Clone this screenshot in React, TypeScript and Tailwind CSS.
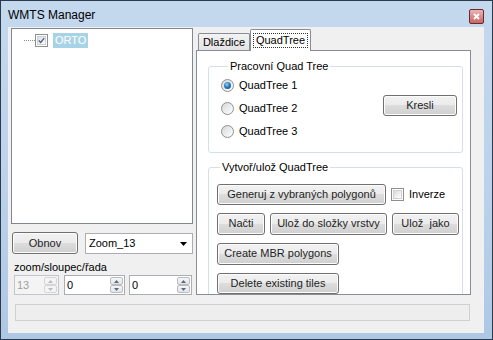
import React from 'react';

const btn =
  'flex items-center justify-center rounded-[3px] border border-[#707070] bg-[linear-gradient(#f2f2f2_0%,#ebebeb_49%,#dddddd_50%,#cfcfcf_100%)] shadow-[inset_0_0_0_1px_#fcfcfc] text-[11px] leading-none text-[#1e1e1e]';

function Btn({ className, children }: { className: string; children: React.ReactNode }) {
  return <div className={`${btn} ${className}`}>{children}</div>;
}

function Check({ checked }: { checked?: boolean }) {
  return (
    <div className="w-[13px] h-[13px] border border-[#8e8f8f] bg-white p-[1px] shrink-0">
      <div className="w-full h-full border border-[#d0d0d0] bg-[linear-gradient(135deg,#dcdcdc,#ffffff)] flex items-center justify-center">
        {checked && (
          <svg width="9" height="9" viewBox="0 0 9 9">
            <path d="M1 4.5 L3.5 7 L8 1.5" fill="none" stroke="#4a5f97" strokeWidth="1.8" />
          </svg>
        )}
      </div>
    </div>
  );
}

function Radio({ checked, label }: { checked?: boolean; label: string }) {
  return (
    <div className="flex items-center h-[23px]">
      <div className="w-[13px] h-[13px] rounded-full border border-[#8f8f8f] bg-[linear-gradient(135deg,#d8d8d8,#ffffff)] flex items-center justify-center">
        {checked && (
          <div className="w-[7px] h-[7px] rounded-full bg-[radial-gradient(circle_at_40%_35%,#8fd3f5_0%,#2a7dbf_45%,#0e3f73_100%)]" />
        )}
      </div>
      <span className="ml-[5px] text-[11px]">{label}</span>
    </div>
  );
}

function Arrow({ up, color }: { up?: boolean; color: string }) {
  return (
    <svg width="5" height="3" viewBox="0 0 5 3">
      <path d={up ? 'M0 3 L2.5 0 L5 3 Z' : 'M0 0 L2.5 3 L5 0 Z'} fill={color} />
    </svg>
  );
}

function Spin({ className, value, disabled }: { className: string; value: string; disabled?: boolean }) {
  const half = `flex-1 flex items-center justify-center rounded-[2px] border ${
    disabled ? 'border-[#d5d5d5] bg-[#f4f4f4]' : 'border-[#b9bcc2] bg-[linear-gradient(#f6f6f6,#e4e4e4)]'
  }`;
  const ac = disabled ? '#b8bcc2' : '#5a6b80';
  return (
    <div
      className={`flex h-[20px] border ${
        disabled ? 'border-[#c2c5c9] bg-[#f4f4f4] text-[#9f9f9f]' : 'border-[#abadb3] bg-white text-black'
      } ${className}`}
    >
      <div className="flex-1 flex items-center pl-[2px] text-[11px]">{value}</div>
      <div className="w-[15px] flex flex-col p-[1px]">
        <div className={half}>
          <Arrow up color={ac} />
        </div>
        <div className={half}>
          <Arrow color={ac} />
        </div>
      </div>
    </div>
  );
}

export default function App() {
  return (
    <div className="w-[493px] h-[340px] border border-[#2c3a4d] bg-[linear-gradient(180deg,#c4d8ee_0%,#bdd3eb_50%,#aec8e4_100%)] flex flex-col font-['Liberation_Sans',Arial,sans-serif] text-black select-none">
      {/* title bar */}
      <div className="h-[26px] flex items-center justify-between pl-[7px] pr-[8px]">
        <span className="text-[12px] mt-[1px]">WMTS Manager</span>
        <div className="mt-[4px] w-[15px] h-[15px] rounded-[2px] border border-[#6b2a2a] bg-[linear-gradient(#eab4b4,#c96565)] flex items-center justify-center">
          <svg width="7" height="7" viewBox="0 0 7 7">
            <path d="M1 1 L6 6 M6 1 L1 6" stroke="#ffffff" strokeWidth="1.8" />
          </svg>
        </div>
      </div>

      {/* client */}
      <div className="flex-1 ml-[7px] mr-[8px] mb-[6px] bg-[#f0f0f0] flex flex-col text-[11px]">
        <div className="flex h-[268px]">
          {/* left column */}
          <div className="ml-[3px] w-[182px] flex flex-col">
            <div className="mt-[1px] h-[198px] border border-[#828790] bg-white">
              <div className="flex items-center mt-[4px] ml-[12px]">
                <div className="w-[11px] border-t border-dotted border-[#8a8a8a]" />
                <Check checked />
                <span className="ml-[5px] h-[15px] px-[2px] flex items-center bg-[#a8d3e6] text-white text-[11px]">ORTO</span>
              </div>
            </div>
            <div className="mt-[8px] flex">
              <Btn className="ml-[1px] w-[66px] h-[22px]">Obnov</Btn>
              <div className="ml-[7px] mt-[1px] w-[108px] h-[21px] border border-[#abadb3] bg-white flex items-center justify-between pl-[3px] pr-[5px]">
                <span>Zoom_13</span>
                <svg width="7" height="4" viewBox="0 0 7 4">
                  <path d="M0 0 L3.5 4 L7 0 Z" fill="#000" />
                </svg>
              </div>
            </div>
            <div className="mt-[6px] ml-[3px] h-[14px] leading-[14px]">zoom/sloupec/řada</div>
            <div className="mt-[1px] ml-[3px] flex">
              <Spin className="w-[45px]" value="13" disabled />
              <Spin className="ml-[5px] w-[61px]" value="0" />
              <Spin className="ml-[4px] w-[63px]" value="0" />
            </div>
          </div>

          {/* tab control */}
          <div className="ml-[3px] w-[275px] flex flex-col">
            <div className="h-[23px] flex items-end">
              <div className="ml-[2px] w-[52px] h-[17px] border border-b-0 border-[#898c95] bg-[linear-gradient(#f3f3f3,#e3e3e3)] flex items-center justify-center rounded-t-[2px]">
                Dlaždice
              </div>
              <div className="relative z-10 -mb-[1px] w-[61px] h-[22px] border border-b-0 border-[#898c95] bg-white flex items-start justify-center pt-[3px] rounded-t-[2px]">
                <span className="border border-dotted border-[#333] px-[2px] leading-[13px]">QuadTree</span>
              </div>
            </div>
            <div className="h-[246px] border border-[#898c95] bg-white overflow-hidden pl-[11px] pr-[7px]">
              <fieldset className="mt-[9px] border border-[#d5dfe5] rounded-[3px] pb-[9px] pl-[12px] pr-[5px]">
                <legend className="ml-[7px] px-[2px] leading-[13px] text-[11px]">Pracovní Quad Tree</legend>
                <div className="flex w-full justify-between">
                  <div className="mt-[1px] flex flex-col">
                    <Radio checked label="QuadTree 1" />
                    <Radio label="QuadTree 2" />
                    <Radio label="QuadTree 3" />
                  </div>
                  <Btn className="mt-[22px] w-[74px] h-[21px]">Kresli</Btn>
                </div>
              </fieldset>

              <fieldset className="mt-[8px] border border-[#d5dfe5] rounded-[3px] pb-[12px] pl-[8px]">
                <legend className="ml-[3px] px-[2px] leading-[13px] text-[11px]">Vytvoř/ulož QuadTree</legend>
                <div className="mt-[10px] flex items-center">
                  <Btn className="w-[169px] h-[21px]">Generuj z vybraných polygonů</Btn>
                  <div className="ml-[5px]">
                    <Check />
                  </div>
                  <span className="ml-[5px]">Inverze</span>
                </div>
                <div className="mt-[8px] flex">
                  <Btn className="w-[48px] h-[22px]">Načti</Btn>
                  <Btn className="ml-[5px] w-[117px] h-[22px]">Ulož do složky vrstvy</Btn>
                  <Btn className="ml-[5px] w-[67px] h-[22px]">Ulož&nbsp; jako</Btn>
                </div>
                <Btn className="mt-[8px] w-[122px] h-[22px]">Create MBR polygons</Btn>
                <Btn className="mt-[8px] w-[122px] h-[21px]">Delete existing tiles</Btn>
              </fieldset>
            </div>
          </div>
        </div>

        <div className="mt-[9px] ml-[7px] w-[455px] h-[17px] border border-[#d0d0d0] bg-[#eeeeee]" />
      </div>
    </div>
  );
}
